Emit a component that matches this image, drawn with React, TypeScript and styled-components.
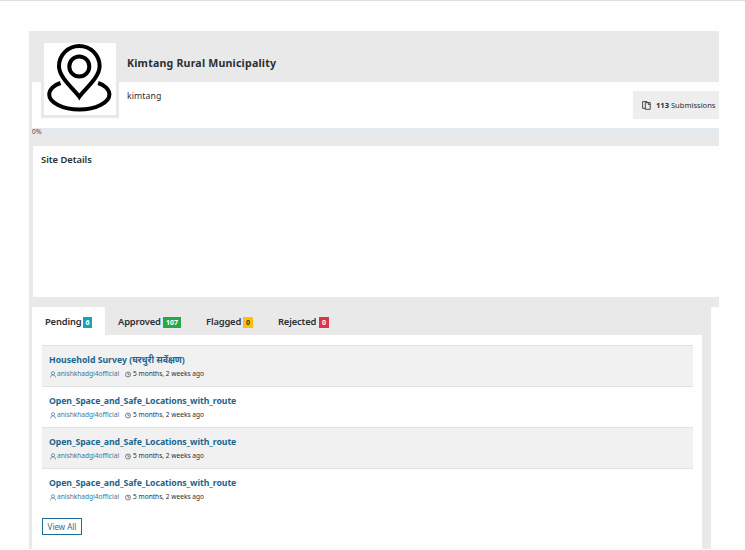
import React from "react";
import styled, { createGlobalStyle } from "styled-components";

const GlobalStyle = createGlobalStyle`
  * { box-sizing: border-box; }
  body {
    margin: 0;
    background: #fefefe;
    color: #2b2f33;
    font-family: "Noto Sans", "Open Sans", "Liberation Sans", sans-serif;
    overflow: hidden;
  }
`;

const Page = styled.div`
  width: 745px;
  height: 550px;
  border-top: 1px solid #dedede;
  padding: 30px 0 0 29px;
  overflow: hidden;
`;

const Site = styled.main`
  width: 690px;
  height: 518px;
  display: flex;
  flex-direction: column;
`;

const Summary = styled.section`
  display: flex;
  flex-direction: column;
  height: 276px;
  padding-left: 3px;
  background: #e9e9e9;
`;

const Profile = styled.header`
  display: flex;
  height: 97px;
  padding-left: 9px;
  background: linear-gradient(#e9e9e9 51px, #fefefe 51px);
`;

const Picture = styled.div`
  width: 78px;
  height: 78px;
  margin-top: 9px;
  border: 3px solid #e9e9e9;
  background: #fefefe;
  svg { display: block; }
`;

const Names = styled.div`
  flex: 1;
  padding-left: 8px;
`;

const SiteName = styled.h1`
  margin: 24px 0 0;
  font-size: 10.6px;
  line-height: 17px;
  font-weight: 700;
  letter-spacing: 0.2px;
  white-space: nowrap;
`;

const Identifier = styled.p`
  margin: 18px 0 0;
  font-size: 8.7px;
  line-height: 12px;
  letter-spacing: 0.12px;
`;

const Submissions = styled.div`
  display: flex;
  align-items: center;
  width: 86px;
  height: 28px;
  margin-top: 60px;
  padding-left: 9px;
  gap: 5px;
  background: #eeeeee;
  font-size: 7.6px;
  letter-spacing: -0.02px;
  white-space: nowrap;
  svg { flex: none; }
`;

const Progress = styled.div`
  height: 9px;
  background: #e6eaee;
  color: #7c3434;
  font-size: 6.8px;
  line-height: 8px;
`;

const Details = styled.div`
  height: 151px;
  margin-top: 9px;
  padding: 6px 0 0 8px;
  margin-left: 1px;
  background: #fefefe;
`;

const DetailsTitle = styled.h2`
  margin: 0;
  font-size: 9.4px;
  line-height: 15px;
  font-weight: 600;
  letter-spacing: -0.03px;
`;

const Responses = styled.section`
  width: 682px;
  flex: 1;
  padding: 0 9px 0 3px;
  background: #e9e9e9;
`;

const Tabs = styled.nav`
  display: flex;
  height: 28px;
`;

const Tab = styled.a<{ $width: number; $active?: boolean }>`
  display: flex;
  align-items: center;
  gap: 2px;
  width: ${(p) => p.$width}px;
  padding-left: 13px;
  background: ${(p) => (p.$active ? "#fefefe" : "transparent")};
  font-size: 9.4px;
  font-weight: 600;
  white-space: nowrap;
`;

const TabLabel = styled.span<{ $width: number }>`
  width: ${(p) => p.$width}px;
  letter-spacing: -0.16px;
`;

const Count = styled.span<{ $color: string; $dark?: boolean; $width: number }>`
  width: ${(p) => p.$width}px;
  height: 11px;
  margin-top: 3px;
  background: ${(p) => p.$color};
  color: ${(p) => (p.$dark ? "#3d3412" : "#ffffff")};
  font-size: 7px;
  line-height: 11px;
  font-weight: 700;
  text-align: center;
`;

const Panel = styled.div`
  height: 214px;
  padding: 10px 9px 0 10px;
  background: #fefefe;
`;

const List = styled.ul`
  margin: 0;
  padding: 0;
  list-style: none;
`;

const Item = styled.li`
  height: 41px;
  padding: 8px 0 0 7px;
  border-top: 1px solid #dfe1e3;
  &:nth-child(odd) { background: #f1f1f1; }
`;

const ItemTitle = styled.a<{ $spacing: number }>`
  display: block;
  color: #17668f;
  font-size: 8.7px;
  line-height: 13px;
  height: 13px;
  font-weight: 700;
  letter-spacing: ${(p) => p.$spacing}px;
  white-space: nowrap;
`;

const Meta = styled.div`
  display: flex;
  align-items: center;
  height: 14px;
  padding-left: 1px;
  font-size: 6.6px;
  line-height: 10px;
  white-space: nowrap;
  svg { flex: none; margin-right: 1px; }
`;

const Author = styled.span`
  display: flex;
  align-items: center;
  width: 75px;
  color: #3d7796;
`;

const Time = styled.span`
  display: flex;
  align-items: center;
  gap: 1px;
`;

const ViewAll = styled.button`
  display: block;
  width: 40px;
  height: 17px;
  margin-top: 9px;
  padding: 0;
  border: 1px solid #1a6c94;
  background: #fefefe;
  color: #2b6f91;
  font-family: inherit;
  font-size: 8px;
  line-height: 15px;
  white-space: nowrap;
`;

const LocationIcon = () => (
  <svg width="72" height="72" viewBox="0 0 72 72" fill="none" stroke="#000" strokeWidth="4">
    <path d="M35.300 53.800C31 47 15 35 15 23.300a20.300 20.300 0 0 1 40.600 0C55.600 35 39.600 47 35.300 53.800Z" />
    <circle cx="35.300" cy="23.500" r="10" />
    <path d="M16.500 40C10 42 5.200 46.500 5.200 51.500c0 8 13.500 15 30.100 15S65.400 59.500 65.400 51.500c0-5-4.800-9.500-11.300-11.500" />
  </svg>
);

const CopyIcon = () => (
  <svg width="9" height="9" viewBox="0 0 9 9" fill="none" stroke="#34373b" strokeWidth="0.9">
    <path d="M3.300 7.300H.6V.6h4.500v1M3.300 1.600h4.900v6.700H3.300ZM6.300 1.600v1.800h1.900" />
  </svg>
);

const UserIcon = () => (
  <svg width="6" height="7" viewBox="0 0 6 7" fill="none" stroke="#3d7796" strokeWidth="0.7">
    <circle cx="3" cy="2.200" r="1.600" />
    <path d="M.6 6.500V5.700c0-1 1-1.800 2.400-1.800s2.400.8 2.400 1.800v.8" />
  </svg>
);

const ClockIcon = () => (
  <svg width="6" height="7" viewBox="0 0 6 7" fill="none" stroke="#4b4f53" strokeWidth="0.7">
    <circle cx="3" cy="3.500" r="2.500" />
    <path d="M3 1.800v1.900h1.500" />
  </svg>
);

const tabs = [
  { label: "Pending", count: 6, color: "#17a2b8", width: 73, text: 36, badge: 9, active: true },
  { label: "Approved", count: 107, color: "#28a745", width: 88, text: 43, badge: 18 },
  { label: "Flagged", count: 0, color: "#ffc107", width: 72, text: 35, badge: 10, dark: true },
  { label: "Rejected", count: 0, color: "#dc3545", width: 80, text: 39, badge: 10 },
];

const items = [
  { title: "Household Survey (घरधुरी सर्वेक्षण)", spacing: 0 },
  { title: "Open_Space_and_Safe_Locations_with_route", spacing: -0.06 },
  { title: "Open_Space_and_Safe_Locations_with_route", spacing: -0.06 },
  { title: "Open_Space_and_Safe_Locations_with_route", spacing: -0.06 },
];

export default function App() {
  return (
    <Page>
      <GlobalStyle />
      <Site>
        <Summary>
          <Profile>
            <Picture><LocationIcon /></Picture>
            <Names>
              <SiteName>Kimtang Rural Municipality</SiteName>
              <Identifier>kimtang</Identifier>
            </Names>
            <Submissions>
              <CopyIcon />
              <span><b>113</b> Submissions</span>
            </Submissions>
          </Profile>
          <Progress>0%</Progress>
          <Details><DetailsTitle>Site Details</DetailsTitle></Details>
        </Summary>
        <Responses>
          <Tabs>
            {tabs.map((t) => (
              <Tab key={t.label} $width={t.width} $active={t.active}>
                <TabLabel $width={t.text}>{t.label}</TabLabel>
                <Count $color={t.color} $dark={t.dark} $width={t.badge}>{t.count}</Count>
              </Tab>
            ))}
          </Tabs>
          <Panel>
            <List>
              {items.map((item, i) => (
                <Item key={i}>
                  <ItemTitle $spacing={item.spacing}>{item.title}</ItemTitle>
                  <Meta>
                    <Author><UserIcon />anishkhadgi4official</Author>
                    <Time><ClockIcon />5 months, 2 weeks ago</Time>
                  </Meta>
                </Item>
              ))}
            </List>
            <ViewAll>View All</ViewAll>
          </Panel>
        </Responses>
      </Site>
    </Page>
  );
}
